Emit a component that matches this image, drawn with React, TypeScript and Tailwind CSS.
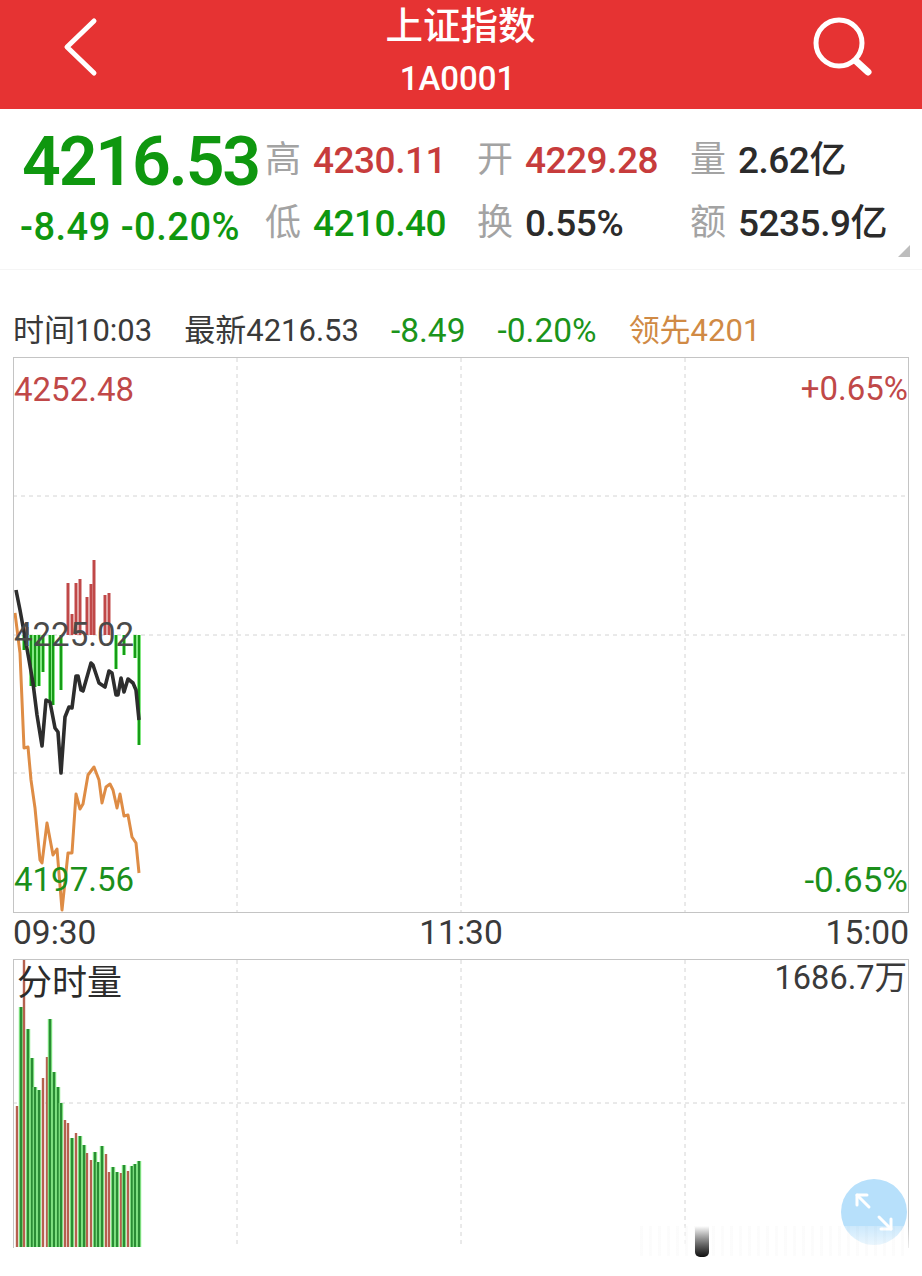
const BLACK_LINE =
  "16,590 20,610 24,632 29,660 33,683 37,715 42,746 46,700 50,702 55,728 58,732 61,773 65,717 69,707 72,708 76,676 78,676 81,690 83,691 91,663 93,665 99,683 105,687 109,671 112,673 116,695 118,695 121,678 124,692 128,679 133,683 136,690 139,720"

const ORANGE_LINE =
  "15,613 20,653 24,748 28,747 31,780 35,808 40,860 42,863 47,823 53,855 57,849 62,910 68,853 72,853 76,794 80,809 83,804 88,775 94,767 99,780 102,803 106,787 110,784 113,790 117,808 120,794 124,816 128,815 132,837 136,843 139,873"

// [x, y the bar reaches], measured from the price axis at y=635
const PRICE_UP = [
  [27, 627], [68, 583], [72, 614], [76, 583], [80, 579], [87, 597], [91, 584], [94, 560], [105, 595], [109, 593],
]
const PRICE_DOWN = [
  [24, 650], [31, 686], [35, 687], [39, 686], [43, 672], [50, 702], [53, 705], [61, 690], [116, 669], [124, 655], [135, 658], [139, 745],
]

// [x, top, isRed]
const VOLUME: [number, number, boolean][] = [
  [17, 1106, true], [21, 1007, false], [24, 959, true], [28, 1029, false], [32, 1058, false], [35, 1087, false],
  [39, 1090, false], [43, 1078, true], [47, 1057, true], [50, 1019, false], [54, 1072, false], [58, 1087, false],
  [61, 1103, false], [65, 1120, true], [68, 1123, true], [72, 1138, false], [76, 1133, true], [80, 1136, false],
  [84, 1145, false], [87, 1153, true], [91, 1160, true], [95, 1152, false], [98, 1162, false], [102, 1146, false],
  [106, 1154, true], [109, 1172, true], [113, 1167, false], [117, 1172, false], [121, 1173, true], [124, 1165, false],
  [128, 1171, true], [132, 1166, false], [135, 1164, false], [139, 1161, false],
]

const FONT = "font-[Roboto,'Noto_Sans_CJK_SC',sans-serif]"

function StatColumn({ rows, width }: { rows: { label: string; value: string; color: string }[]; width: string }) {
  return (
    <div className={`flex flex-col gap-[19px] ${width}`}>
      {rows.map((row) => (
        <div key={row.label} className="flex h-[44px] items-center gap-[12px]">
          <span className="text-[36px] leading-none text-[#a3a3a3]">{row.label}</span>
          <span className={`text-[37px] leading-none font-medium tracking-[-0.5px] ${row.color}`}>{row.value}</span>
        </div>
      ))}
    </div>
  )
}

function GridLines({ from, to, rows }: { from: number; to: number; rows: number[] }) {
  return (
    <g stroke="#d4d4d4" strokeWidth="1" strokeDasharray="4 4">
      {[237, 461, 685].map((x) => (
        <line key={x} x1={x} x2={x} y1={from} y2={to} />
      ))}
      {rows.map((y) => (
        <line key={y} x1={13} x2={908} y1={y} y2={y} />
      ))}
    </g>
  )
}

export default function App() {
  return (
    <div className={`relative h-[1276px] w-[922px] overflow-hidden bg-white ${FONT}`}>
      <header className="flex h-[109px] items-center justify-between bg-[#e63333] px-[50px] text-white">
        <svg width="60" height="60" viewBox="0 0 60 60" fill="none" stroke="currentColor" strokeWidth="5" strokeLinecap="round" strokeLinejoin="round" className="mb-[16px]">
          <polyline points="44,4 17,30 44,56" />
        </svg>
        <div className="flex flex-col items-center">
          <span className="mr-[1px] h-[52px] text-[37.5px] leading-[44px] font-medium">上证指数</span>
          <span className="mr-[7px] h-[50px] text-[33px] leading-[46px] font-medium">1A0001</span>
        </div>
        <svg width="60" height="62" viewBox="0 0 60 62" fill="none" stroke="currentColor" strokeWidth="5" strokeLinecap="round" className="mb-[16px]">
          <circle cx="27" cy="27" r="23" />
          <line x1="44" y1="45" x2="56" y2="56" strokeWidth="7" />
        </svg>
      </header>

      <section className="relative flex h-[161px] items-start border-b border-[#f5f5f5] pt-[29px]">
        <div className="flex w-[265px] flex-col pl-[20px] text-[#0f970f]">
          <span className="ml-[2px] h-[48px] text-[68px] leading-[48px] font-semibold tracking-[-2.2px]">4216.53</span>
          <span className="mt-[21px] text-[38px] leading-[40px] font-medium tracking-[0.5px] whitespace-nowrap">-8.49 -0.20%</span>
        </div>
        <StatColumn
          width="w-[212px]"
          rows={[
            { label: "高", value: "4230.11", color: "text-[#c73c3c]" },
            { label: "低", value: "4210.40", color: "text-[#0f970f]" },
          ]}
        />
        <StatColumn
          width="w-[213px]"
          rows={[
            { label: "开", value: "4229.28", color: "text-[#c73c3c]" },
            { label: "换", value: "0.55%", color: "text-[#2b2b2b]" },
          ]}
        />
        <StatColumn
          width="w-[232px]"
          rows={[
            { label: "量", value: "2.62亿", color: "text-[#2b2b2b]" },
            { label: "额", value: "5235.9亿", color: "text-[#2b2b2b]" },
          ]}
        />
        <div className="absolute right-[12px] bottom-[12px] h-0 w-0 border-b-[12px] border-l-[12px] border-b-[#bdbdbd] border-l-transparent" />
      </section>

      <div className="flex h-[87px] items-center gap-[32px] pt-[34px] pl-[13px] text-[31px] leading-none whitespace-nowrap">
        <span className="text-[#3a3a3a]">时间10:03</span>
        <span className="text-[#3a3a3a]">最新4216.53</span>
        <span className="text-[33.5px] text-[#1b941b]">-8.49</span>
        <span className="text-[33.5px] text-[#1b941b]">-0.20%</span>
        <span className="text-[#d08a45]">领先4201</span>
      </div>

      <div className="relative mx-[13px] h-[556px] w-[896px] border border-[#c4c4c4]">
        <svg className="absolute inset-0 h-full w-full" viewBox="14 358 894 554" fill="none">
          <GridLines from={358} to={912} rows={[496, 635, 773]} />
          {PRICE_UP.map(([x, y]) => (
            <line key={x} x1={x} x2={x} y1={635} y2={y} stroke="#c04848" strokeWidth="3" />
          ))}
          {PRICE_DOWN.map(([x, y]) => (
            <g key={x}>
              <line x1={x} x2={x} y1={635} y2={y} stroke="#8ff08f" strokeWidth="4" />
              <line x1={x} x2={x} y1={635} y2={y} stroke="#189a18" strokeWidth="2.2" />
            </g>
          ))}
          <polyline points={ORANGE_LINE} stroke="#de8c45" strokeWidth="3" strokeLinejoin="round" />
          <polyline points={BLACK_LINE} stroke="#2d2d2d" strokeWidth="3.6" strokeLinejoin="round" />
        </svg>
        <span className="absolute top-[15px] left-0 text-[33px] leading-none text-[#c04848]">4252.48</span>
        <span className="absolute top-[14px] right-0 text-[33px] leading-none text-[#c04848]">+0.65%</span>
        <span className="absolute top-[260px] left-0 text-[33px] leading-none text-[#4a4a4a]">4225.02</span>
        <span className="absolute top-[505px] left-0 text-[33px] leading-none text-[#1b8f1b]">4197.56</span>
        <span className="absolute top-[505px] right-0 text-[35px] leading-none text-[#1b8f1b]">-0.65%</span>
      </div>

      <div className="mx-[13px] flex h-[46px] w-[896px] items-center justify-between pb-[6px] text-[33.5px] leading-none text-[#3a3a3a]">
        <span>09:30</span>
        <span>11:30</span>
        <span>15:00</span>
      </div>

      <div className="relative mx-[13px] h-[289px] w-[896px] border-x border-t border-[#c4c4c4]">
        <svg className="absolute inset-0 h-full w-full" viewBox="14 960 894 288" fill="none">
          <GridLines from={960} to={1248} rows={[1103]} />
          {VOLUME.map(([x, top, isRed]) => (
            <g key={x}>
              {!isRed && <line x1={x} x2={x} y1={1247} y2={top} stroke="#8ff08f" strokeWidth="4.5" />}
              <line x1={x} x2={x} y1={1247} y2={top} stroke={isRed ? "#b5604f" : "#2a8c34"} strokeWidth="2.4" />
            </g>
          ))}
        </svg>
        <span className="absolute top-[6px] left-[3px] text-[35px] leading-none text-[#2b2b2b]">分时量</span>
        <span className="absolute top-[2px] right-[1px] text-[32.5px] leading-none text-[#3a3a3a]">1686.7万</span>
      </div>

      {/* floating expand button */}
      <div className="absolute top-[1179px] left-[841px] flex h-[66px] w-[66px] items-center justify-center rounded-full bg-[#b7e0fb]">
        <svg width="40" height="40" viewBox="0 0 40 40" fill="none" stroke="#fff" strokeWidth="3" strokeLinecap="round" strokeLinejoin="round">
          <polyline points="3,13 3,3 13,3" />
          <line x1="3" y1="3" x2="15" y2="15" />
          <polyline points="37,27 37,37 27,37" />
          <line x1="37" y1="37" x2="25" y2="25" />
        </svg>
      </div>

      {/* blurred watermark strip along the bottom */}
      <div className="absolute top-[1226px] left-[630px] h-[32px] w-[292px] bg-gradient-to-b from-transparent to-white" />
      <div className="absolute top-[1226px] left-[640px] h-[30px] w-[265px] bg-[repeating-linear-gradient(90deg,#f4f4f4_0px,#f4f4f4_3px,#ffffff_3px,#ffffff_9px)] opacity-30" />
      <div className="absolute top-[1226px] left-[695px] h-[31px] w-[14px] rounded-b-[5px] bg-gradient-to-b from-[#ffffff] to-[#111111]" />
    </div>
  )
}
